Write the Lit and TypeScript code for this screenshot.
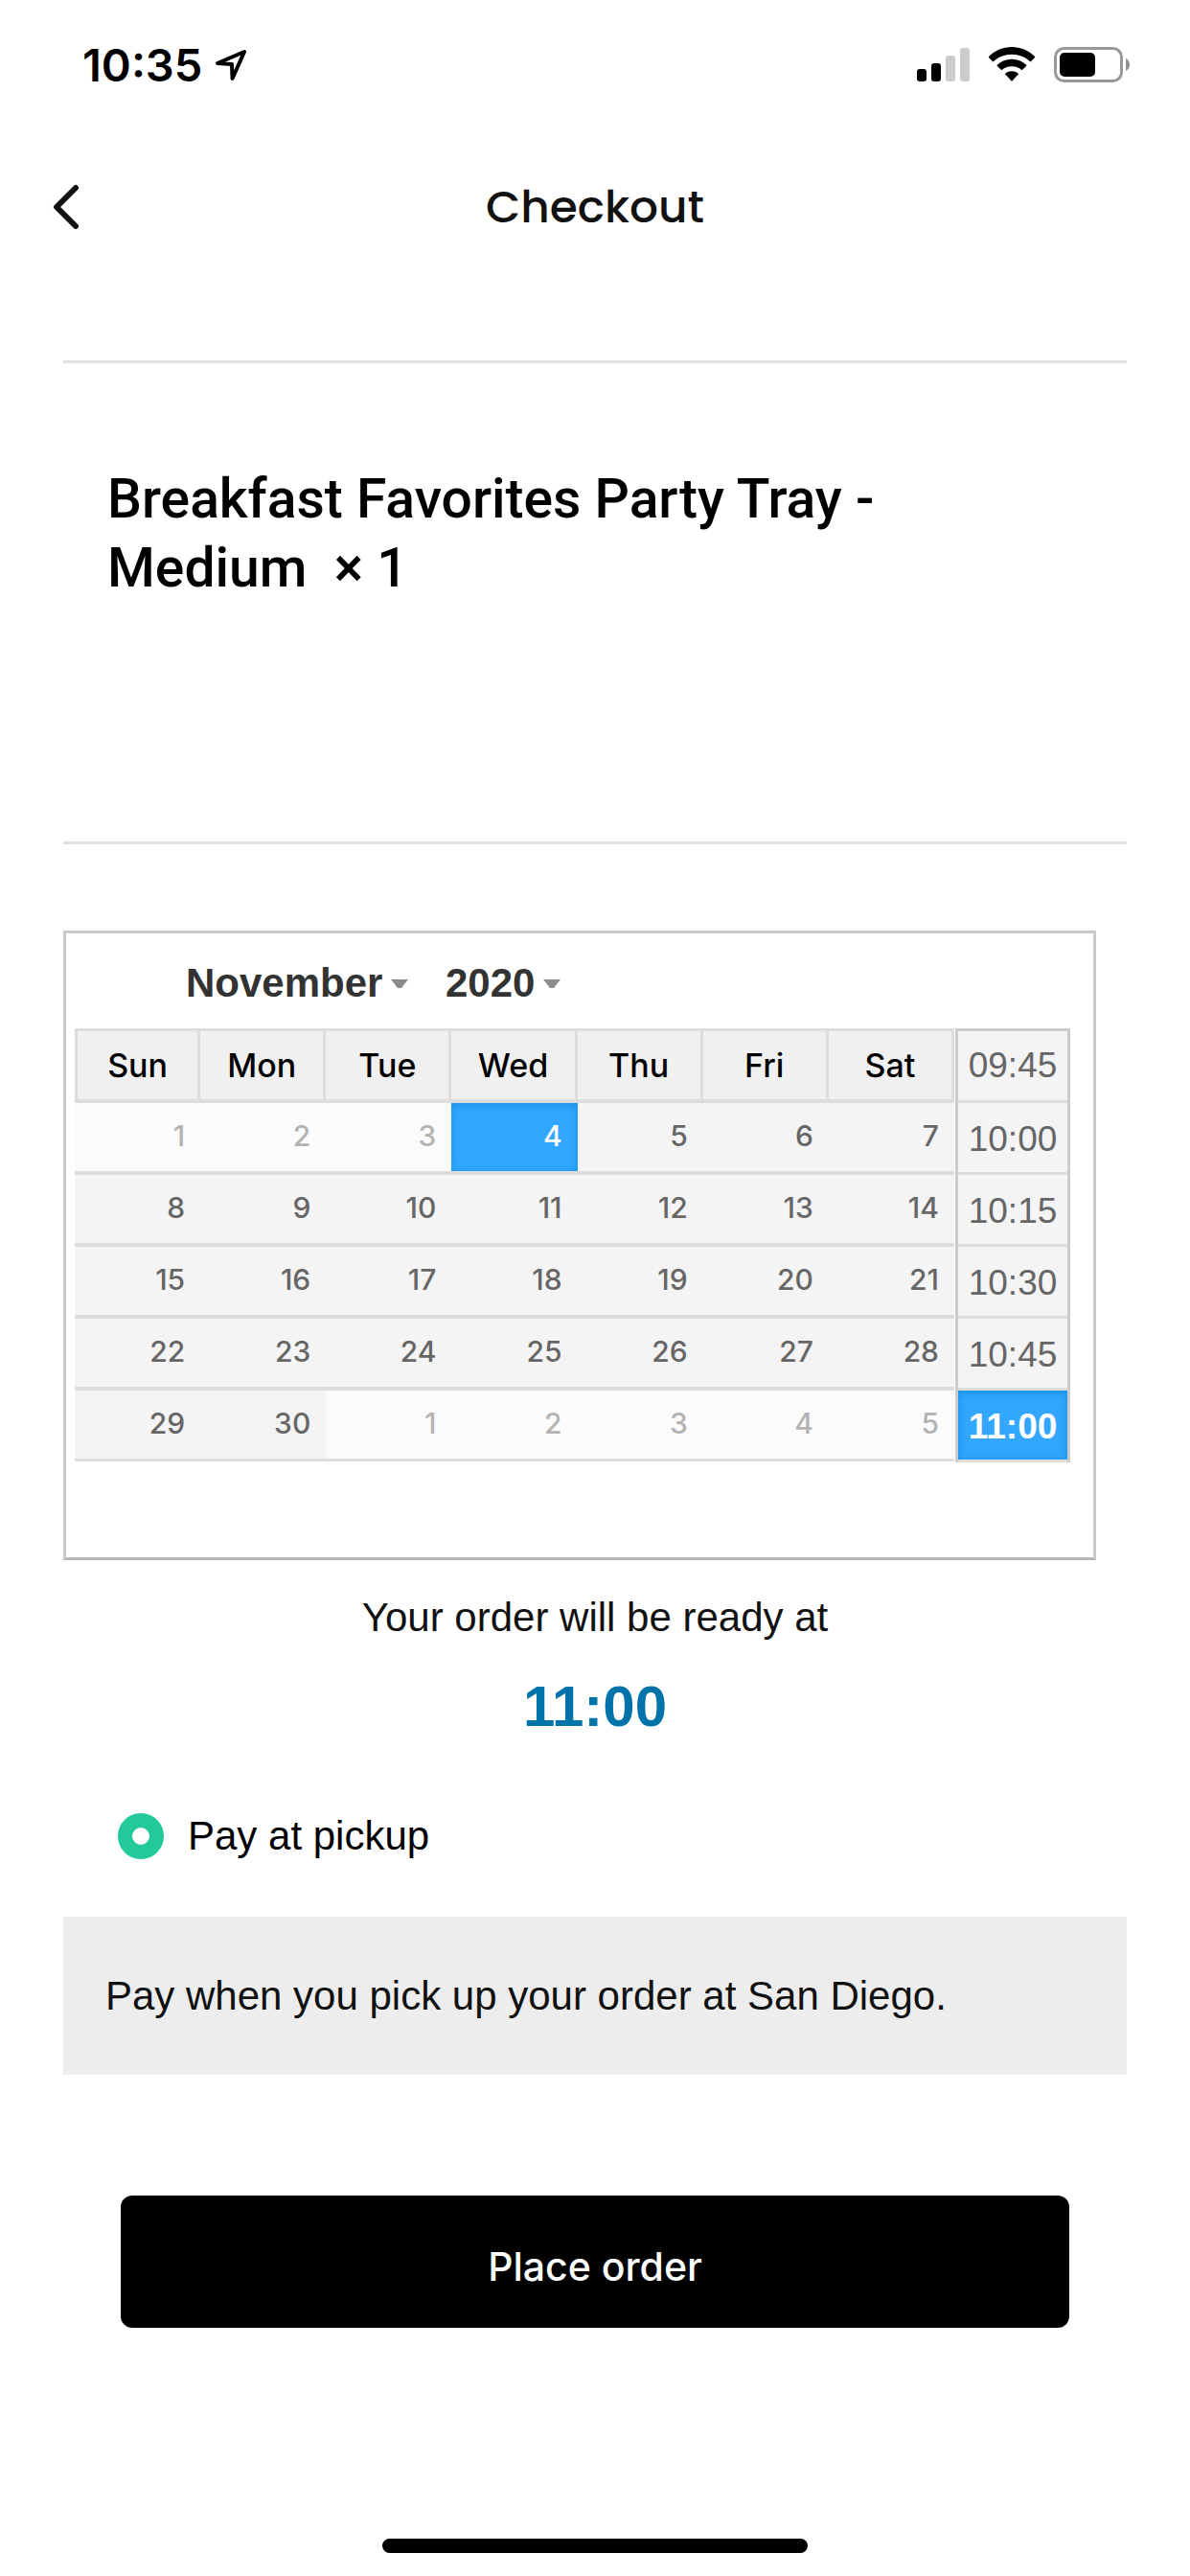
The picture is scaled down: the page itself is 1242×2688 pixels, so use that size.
import { LitElement, html, css, nothing } from "lit";
import { customElement, state } from "lit/decorators.js";
import { classMap } from "lit/directives/class-map.js";

interface Day {
  label: number;
  key: string;
  available: boolean;
}

const WEEKDAYS = ["Sun", "Mon", "Tue", "Wed", "Thu", "Fri", "Sat"];
const SLOTS = ["09:45", "10:00", "10:15", "10:30", "10:45", "11:00"];

/* Five weeks starting on Sunday, November 1, 2020; the last days spill into December. */
const WEEKS: Day[][] = Array.from({ length: 5 }, (_, week) =>
  Array.from({ length: 7 }, (_, weekday) => {
    const n = week * 7 + weekday + 1;
    return {
      label: n > 30 ? n - 30 : n,
      key: n > 30 ? `dec-${n - 30}` : `nov-${n}`,
      available: n >= 4 && n <= 30,
    };
  })
);

@customElement("status-bar")
export class StatusBar extends LitElement {
  static styles = css`
    :host {
      display: flex;
      align-items: center;
      justify-content: space-between;
      height: 48px;
      padding: 44px 63px 0 86px;
      font-family: Inter, "Liberation Sans", sans-serif;
      color: #000;
    }
    .group {
      display: flex;
      align-items: center;
    }
    .time {
      font-size: 47px;
      font-weight: 600;
      line-height: 48px;
    }
    .arrow {
      margin-left: 13px;
    }
    .icons {
      gap: 20px;
    }
    svg {
      display: block;
    }
  `;

  render() {
    return html`
      <div class="group">
        <span class="time">10:35</span>
        <svg class="arrow" width="34" height="34" viewBox="0 0 34 34" fill="none" stroke="#000" stroke-width="4" stroke-linejoin="round" aria-hidden="true">
          <path d="M31 3 L3 15 L18 16 L18.5 31 Z" />
        </svg>
      </div>
      <div class="group icons">
        <svg width="55" height="38" viewBox="0 0 55 38" aria-hidden="true">
          <rect x="0" y="23" width="10" height="13" rx="3" />
          <rect x="15" y="17" width="10" height="19" rx="3" />
          <rect x="30" y="9" width="10" height="27" rx="3" fill="#ccc" />
          <rect x="45" y="1" width="10" height="35" rx="3" fill="#ccc" />
        </svg>
        <svg width="48" height="38" viewBox="0 0 48 38" aria-hidden="true">
          <path d="M24 0 C33 0 41.5 3.6 48 10 Q48.300 10.500 48 11 L43.500 15.500 C38.300 10.600 31.500 7.800 24 7.800 C16.500 7.800 9.700 10.600 4.500 15.500 L0 11 Q-0.300 10.500 0 10 C6.500 3.600 15 0 24 0 Z" />
          <path d="M24 12.800 C29.800 12.800 35.200 15 39.300 18.800 Q39.600 19.300 39.300 19.700 L34.700 24.300 C31.800 21.800 28.100 20.300 24 20.300 C19.900 20.300 16.200 21.800 13.300 24.300 L8.700 19.700 Q8.400 19.300 8.700 18.800 C12.800 15 18.200 12.800 24 12.800 Z" />
          <path d="M24 25.300 C26.500 25.300 28.800 26.100 30.600 27.600 Q31 28.200 30.600 28.700 L24.400 35.500 Q24 35.900 23.600 35.500 L17.400 28.700 Q17 28.200 17.400 27.600 C19.200 26.100 21.500 25.300 24 25.300 Z" />
        </svg>
        <svg width="79" height="38" viewBox="0 0 79 38" aria-hidden="true">
          <rect x="1.500" y="1.500" width="69" height="34" rx="9" fill="none" stroke="#999" stroke-width="3" />
          <rect x="6" y="6" width="37" height="25" rx="5" />
          <path d="M75 12 Q79 14 79 18.500 Q79 23 75 25 Z" fill="#8f8f8f" />
        </svg>
      </div>
    `;
  }
}

@customElement("pickup-calendar")
export class PickupCalendar extends LitElement {
  @state() private day = "nov-4";
  @state() private time = "11:00";

  static styles = css`
    :host {
      display: block;
      border: 3px solid #cacaca;
      border-bottom-color: #b7b7b7;
      padding: 0 24px 99px 9px;
      font-family: Inter, "Liberation Sans", sans-serif;
    }
    .period {
      display: flex;
      align-items: center;
      gap: 39px;
      height: 95px;
      padding: 4px 0 0 116px;
    }
    .picker {
      display: flex;
      align-items: center;
      gap: 8px;
    }
    select {
      appearance: none;
      border: 0;
      margin: 0;
      padding: 0;
      background: none;
      color: #333;
      font: 700 42px/48px "Liberation Sans", Arial, sans-serif;
    }
    svg {
      display: block;
    }
    .body {
      display: flex;
      align-items: flex-start;
      gap: 1px;
    }
    table {
      flex: 1;
      width: 100%;
      table-layout: fixed;
      border-collapse: separate;
      border-spacing: 0;
    }
    th {
      box-sizing: border-box;
      height: 78px;
      padding: 0;
      border: 0 solid #ddd;
      border-width: 3px 3px 4px 0;
      background: #f0f0f0;
      font-size: 34px;
      font-weight: 500;
      line-height: 40px;
      color: #000;
    }
    th:first-child {
      border-left-width: 3px;
    }
    td {
      box-sizing: border-box;
      height: 75px;
      padding: 0;
      border-bottom: 4px solid #ddd;
      background: #f4f4f4;
    }
    tr:last-child td {
      height: 74px;
      border-bottom-width: 3px;
    }
    td.off {
      background: #fbfbfb;
    }
    button {
      display: block;
      box-sizing: border-box;
      width: 100%;
      margin: 0;
      border: 0;
      background: none;
      color: #666;
    }
    .day {
      height: 71px;
      padding: 0 16px 4px 0;
      text-align: right;
      font: 500 30px/36px Inter, "Liberation Sans", sans-serif;
    }
    .off .day {
      color: #b3b3b3;
    }
    .slots {
      box-sizing: border-box;
      width: 120px;
      margin: 0;
      padding: 0;
      list-style: none;
      border: 3px solid #ccc;
      border-bottom: 0;
      background: #f4f4f4;
    }
    .slots li {
      border-bottom: 3px solid #ddd;
    }
    .slot {
      height: 72px;
      padding: 4px 0 0;
      text-align: center;
      font: 400 37px/44px "Liberation Sans", Arial, sans-serif;
    }
    li:first-child .slot {
      padding-top: 0;
    }
    .day.chosen,
    .slot.chosen {
      background: #33a6ff;
      box-shadow: inset 0 2px 8px #178fe5;
      color: #fff;
    }
    .slot.chosen {
      font-weight: 700;
    }
  `;

  private caret() {
    return html`<svg width="18" height="10" viewBox="0 0 18 10" aria-hidden="true">
      <path d="M0 1 H18 L11 10 H7 Z" fill="#8c8c8c" />
    </svg>`;
  }

  render() {
    return html`
      <div class="period">
        <div class="picker">
          <select aria-label="Month"><option>November</option></select>
          ${this.caret()}
        </div>
        <div class="picker">
          <select aria-label="Year"><option>2020</option></select>
          ${this.caret()}
        </div>
      </div>
      <div class="body">
        <table>
          <thead>
            <tr>${WEEKDAYS.map((name) => html`<th scope="col">${name}</th>`)}</tr>
          </thead>
          <tbody>
            ${WEEKS.map(
              (week) => html`<tr>
                ${week.map(
                  (d) => html`<td class=${d.available ? "on" : "off"}>
                    <button
                      class=${classMap({ day: true, chosen: d.key === this.day })}
                      ?disabled=${!d.available}
                      aria-current=${d.key === this.day ? "date" : nothing}
                      @click=${() => (this.day = d.key)}
                    >${d.label}</button>
                  </td>`
                )}
              </tr>`
            )}
          </tbody>
        </table>
        <ul class="slots">
          ${SLOTS.map(
            (time) => html`<li>
              <button
                class=${classMap({ slot: true, chosen: time === this.time })}
                aria-pressed=${time === this.time ? "true" : "false"}
                @click=${() => this.pick(time)}
              >${time}</button>
            </li>`
          )}
        </ul>
      </div>
    `;
  }

  private pick(time: string) {
    this.time = time;
    this.dispatchEvent(new CustomEvent("slot-change", { detail: time }));
  }
}

@customElement("app-root")
export class AppRoot extends LitElement {
  @state() private readyAt = "11:00";

  static styles = css`
    :host {
      display: flex;
      flex-direction: column;
      min-height: 100vh;
      background: #fff;
      color: #111;
      font-family: "Liberation Sans", Arial, sans-serif;
      font-size: 42px;
      line-height: 48px;
    }
    h1,
    h2,
    p {
      margin: 0;
    }
    .nav {
      display: grid;
      grid-template-columns: 120px 1fr 120px;
      align-items: center;
      height: 120px;
      margin-top: 64px;
    }
    .back {
      display: flex;
      padding: 0 0 0 54px;
      border: 0;
      background: none;
    }
    h1 {
      text-align: center;
      font: 500 47px/60px Poppins, Inter, "Liberation Sans", sans-serif;
    }
    main {
      padding: 100px 66px 0;
    }
    .item {
      padding: 106px 160px 249px 46px;
      border: 0 solid #e0e0e0;
      border-width: 3px 0;
    }
    h2 {
      font: 500 57px/72px Roboto, "Liberation Sans", sans-serif;
      color: #000;
    }
    .calendar {
      margin: 90px 32px 0 0;
    }
    .ready {
      margin-top: 36px;
      text-align: center;
    }
    .ready-time {
      margin-top: 33px;
      text-align: center;
      font-size: 60px;
      font-weight: 700;
      line-height: 72px;
      color: #0073aa;
    }
    .method {
      display: flex;
      align-items: center;
      gap: 25px;
      margin: 75px 0 0 57px;
      color: #000;
    }
    .method input {
      appearance: none;
      box-sizing: border-box;
      width: 48px;
      height: 48px;
      margin: 0;
      border: 15px solid #22c999;
      border-radius: 50%;
      background: #fff;
    }
    .note {
      margin-top: 60px;
      padding: 58px 44px;
      background: #ededed;
      line-height: 49px;
    }
    .place {
      display: block;
      box-sizing: border-box;
      width: calc(100% - 120px);
      height: 138px;
      margin: 126px 60px 0;
      padding: 10px 0 0;
      border: 0;
      border-radius: 12px;
      background: #000;
      color: #fff;
      font: 500 41px/48px Inter, "Liberation Sans", sans-serif;
    }
    .home {
      width: 444px;
      height: 15px;
      margin: auto auto 24px;
      border-radius: 8px;
      background: #000;
    }
  `;

  render() {
    return html`
      <status-bar></status-bar>
      <header class="nav">
        <button class="back" aria-label="Back">
          <svg width="30" height="48" viewBox="0 0 30 48" fill="none" stroke="#111" stroke-width="6" stroke-linecap="round" stroke-linejoin="round" aria-hidden="true">
            <path d="M25 4 L5 24 L25 44" />
          </svg>
        </button>
        <h1>Checkout</h1>
      </header>
      <main>
        <section class="item">
          <h2>Breakfast Favorites Party Tray - Medium&nbsp; ×&nbsp;1</h2>
        </section>
        <pickup-calendar class="calendar" @slot-change=${(e: CustomEvent<string>) => (this.readyAt = e.detail)}></pickup-calendar>
        <p class="ready">Your order will be ready at</p>
        <p class="ready-time">${this.readyAt}</p>
        <label class="method"><input type="radio" name="payment" checked />Pay at pickup</label>
        <p class="note">Pay when you pick up your order at San Diego.</p>
        <button class="place">Place order</button>
      </main>
      <div class="home"></div>
    `;
  }
}
